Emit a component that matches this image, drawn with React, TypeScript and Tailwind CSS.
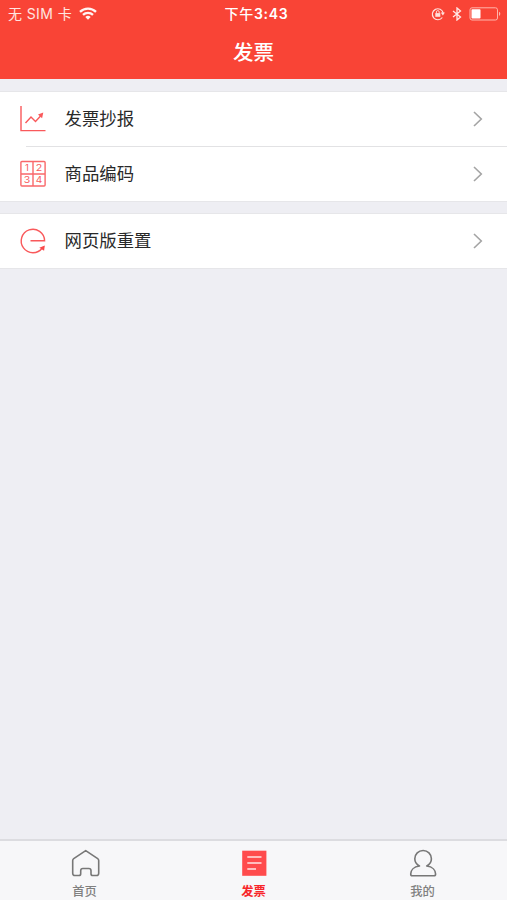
import type { ReactNode } from 'react';

function ChartIcon() {
  return (
    <svg width="28" height="28" viewBox="0 0 28 28" fill="none" stroke="#f9595b" strokeWidth="1.400">
      <path d="M2 1v24.600h24.500" />
      <path d="M6.500 18l5.500-6 4.500 4.500 6-6.500" />
      <path d="M19 9.600l5.300-2.200-1.200 5.800z" fill="#f9595b" stroke="none" />
    </svg>
  );
}

function GridIcon() {
  return (
    <svg width="28" height="28" viewBox="0 0 28 28" fill="none" stroke="#f9686a" strokeWidth="1.400">
      <rect x="1.900" y="1.500" width="24.200" height="24.500" rx="1" />
      <path d="M14 2v24M2 14h24" />
      <g fill="#f75c5e" stroke="none" fontSize="9.500" fontWeight="400" textAnchor="middle" className="font-['Inter',sans-serif]">
        <text x="8" y="11.200">1</text>
        <text x="20" y="11.200" textLength="6.500" lengthAdjust="spacingAndGlyphs">2</text>
        <text x="8" y="23.400" textLength="6.500" lengthAdjust="spacingAndGlyphs">3</text>
        <text x="20" y="23.400" textLength="6.500" lengthAdjust="spacingAndGlyphs">4</text>
      </g>
    </svg>
  );
}

function ResetIcon() {
  return (
    <svg width="28" height="28" viewBox="0 0 28 28" fill="none" stroke="#f9595b" strokeWidth="1.400">
      <path d="M11.500 13.700h14.100A11.700 11.700 0 1 0 23.300 21" />
      <path d="M20.300 20.800l5.500-2.400-.7 5.300z" fill="#f9484a" stroke="none" />
    </svg>
  );
}

function Row({ icon, label }: { icon: ReactNode; label: string }) {
  return (
    <div className="flex h-[54px] items-center bg-white pl-[19px] pr-6">
      {icon}
      <span className="ml-[17.500px] text-[17.400px] leading-6 text-[#292929]">{label}</span>
      <svg className="ml-auto" width="10" height="16" viewBox="0 0 10 16" fill="none" stroke="#a4a4a4" strokeWidth="1.600">
        <path d="M1 1l7.300 7L1 15" />
      </svg>
    </div>
  );
}

function Tab({ icon, label, active = false }: { icon: ReactNode; label: string; active?: boolean }) {
  return (
    <div className={active ? 'flex flex-1 flex-col items-center pt-[7px] font-bold text-[#f8262a]' : 'flex flex-1 flex-col items-center pt-[7px] font-medium text-[#808080]'}>
      <div className="h-[30px] w-[30px] shrink-0">{icon}</div>
      <span className="mt-[5px] text-[12.300px] leading-[18px]">{label}</span>
    </div>
  );
}

export default function App() {
  return (
    <div className="flex h-[900px] w-[507px] flex-col overflow-hidden bg-[#eeeef3] font-['Liberation_Sans','Noto_Sans_CJK_SC',sans-serif]">
      <header className="h-[79px] shrink-0 bg-[#f94436] text-white">
        <div className="grid h-[27px] grid-cols-3 items-center pl-2 pr-[6px] font-['Inter','Noto_Sans_CJK_SC',sans-serif]">
          <div className="flex items-center gap-[7px] text-[#ffe5e0]">
            <span className="whitespace-pre text-[14px] leading-5 tracking-[0.400px]">无 SIM 卡</span>
            <svg width="18" height="13" viewBox="0 0 18 13" fill="none" stroke="#fff4f2" strokeWidth="2.300">
              <path d="M1 4.800a11.500 11.500 0 0 1 16 0M4 7.900a7.200 7.200 0 0 1 10 0" />
              <path d="M6.300 10.100a4 4 0 0 1 5.400 0L9 12.800z" fill="#fff4f2" stroke="none" />
            </svg>
          </div>
          <span className="pl-1 text-center text-[14px] font-semibold leading-5 tracking-[0.700px]"><span className="font-medium">下午</span>3:43</span>
          <div className="flex items-center justify-end">
            <svg width="14" height="14" viewBox="0 0 14 14" fill="none" stroke="#ffe0dc" strokeWidth="1.200">
              <path d="M11.300 10.500A5.500 5.500 0 1 1 12.200 6" />
              <path d="M9.700 5.600h4.200l-2 2.800z" fill="#ffe0dc" stroke="none" />
              <rect x="4.300" y="6.100" width="5" height="3.700" fill="#ffe0dc" stroke="none" />
              <path d="M5.400 6.300V5a1.400 1.400 0 0 1 2.800 0v1.300" strokeWidth=".9" />
            </svg>
            <svg className="ml-[7px]" width="10" height="14" viewBox="0 0 10 14" fill="none" stroke="#ffe9e6" strokeWidth="1.300">
              <path d="M1 4l7.500 6L5 13V1l3.500 3L1 10" />
            </svg>
            <svg className="ml-[7px]" width="32" height="14" viewBox="0 0 32 14" fill="none">
              <rect x="1" y=".8" width="27.500" height="12.200" rx="2" stroke="#ffb5ac" strokeWidth="1" />
              <rect x="2.500" y="2.300" width="9" height="9.200" rx=".8" fill="#fff" />
              <path d="M30 4.800c1.800.7 1.800 3.500 0 4.200z" fill="#ffb5ac" />
            </svg>
          </div>
        </div>
        <h1 className="text-center text-[20.500px] font-medium leading-[52px]">发票</h1>
      </header>
      <main className="flex-1 pt-3">
        <section className="border-y border-[#e6e6e9] bg-white">
          <Row icon={<ChartIcon />} label="发票抄报" />
          <div className="ml-[26px] h-px bg-[#e2e2e4]" />
          <Row icon={<GridIcon />} label="商品编码" />
        </section>
        <section className="mt-[11px] border-y border-[#e6e6e9] bg-white">
          <Row icon={<ResetIcon />} label="网页版重置" />
        </section>
      </main>
      <nav className="flex h-[61px] shrink-0 border-t-2 border-[#dcdce0] bg-[#f7f7f9]">
        <Tab label="首页" icon={
          <svg width="30" height="30" viewBox="0 0 30 30" fill="none" stroke="#777" strokeWidth="1.600" strokeLinejoin="round">
            <path d="M3.700 10.600L15.700 2.600l12 8q1 .8 1 2v12.600q0 2.300-2.300 2.300h-3.600q-1.800 0-1.800-1.800v-3q0-2.200-2.200-2.200h-5.900q-2.200 0-2.200 2.200v3q0 1.800-1.800 1.800H5q-2.300 0-2.300-2.300V12.600q0-1.200 1-2z" />
          </svg>
        } />
        <Tab active label="发票" icon={
          <svg width="30" height="30" viewBox="0 0 30 30" fill="none">
            <rect x="3.200" y="2.700" width="24.200" height="25.100" fill="#ff4b4d" />
            <path d="M8.300 9h14.200M8.300 15h14.200M8.300 21h8.700" stroke="#ffe3e4" strokeWidth="1.600" />
          </svg>
        } />
        <Tab label="我的" icon={
          <svg width="30" height="30" viewBox="0 0 30 30" fill="none" stroke="#777" strokeWidth="1.600" strokeLinejoin="round">
            <path d="M11.500 18C8.400 16.500 6.800 13.900 6.800 10.800a8.300 8.300 0 0 1 16.600 0c0 3.100-1.600 5.700-4.700 7.200 6 .8 8.900 4.400 8.900 8 0 1.200-.5 1.800-1.600 1.800H4.200q-1.500 0-1.500-1.800c0-3.600 2.800-7.200 8.800-8z" />
          </svg>
        } />
      </nav>
    </div>
  );
}
